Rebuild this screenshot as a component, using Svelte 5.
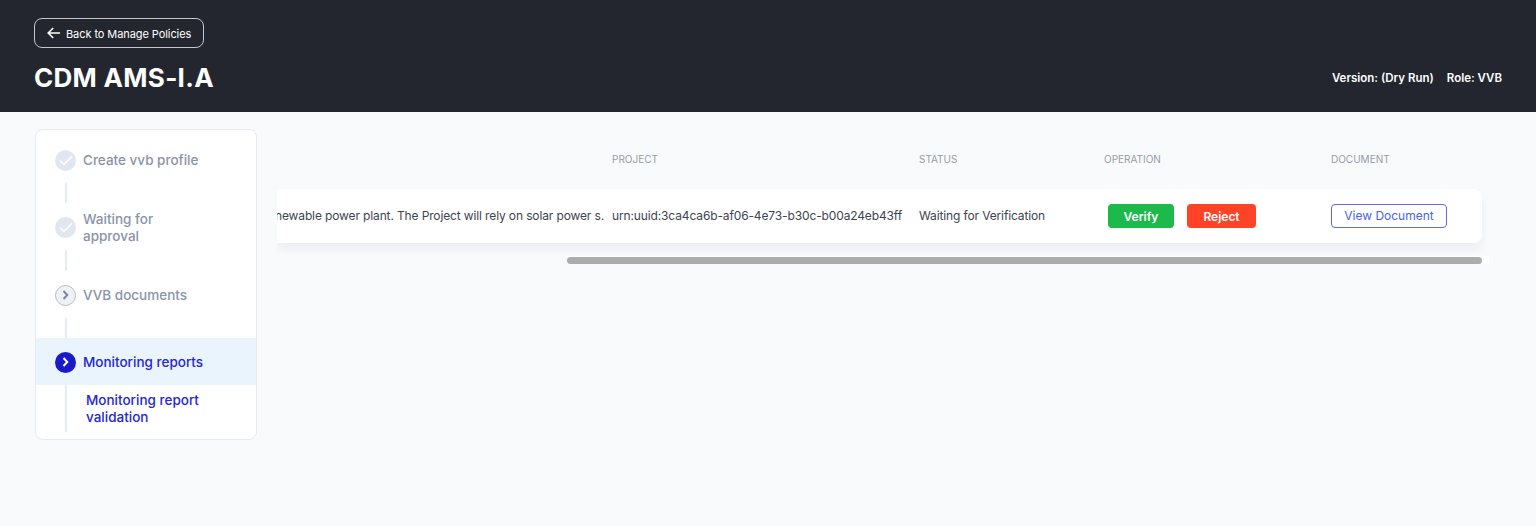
<script>
  const steps = [
    { label: 'Create vvb profile', state: 'done' },
    { label: 'Waiting for approval', state: 'done' },
    { label: 'VVB documents', state: 'next' },
    { label: 'Monitoring reports', state: 'active' }
  ];
</script>

<div class="page">
  <header class="header">
    <button class="back">
      <svg width="13" height="12" viewBox="0 0 13 12" fill="none" stroke="currentColor" stroke-width="1.6">
        <path d="M13 6H1.2M6.2 1 1.2 6l5 5" />
      </svg>
      <span>Back to Manage Policies</span>
    </button>
    <div class="title-row">
      <h1>CDM AMS-I.A</h1>
      <div class="meta">
        <span>Version: (Dry Run)</span>
        <span>Role: VVB</span>
      </div>
    </div>
  </header>

  <main class="content">
    <nav class="sidebar">
      {#each steps as step, i}
        <div class="step {step.state}">
          <span class="icon">
            {#if step.state === 'done'}
              <svg width="14" height="11" viewBox="0 0 14 11" fill="none" stroke="#fff" stroke-width="1.5">
                <path d="M1 5.5 5 9.5 13 1.2" />
              </svg>
            {:else}
              <svg width="7" height="10" viewBox="0 0 7 10" fill="none" stroke="currentColor" stroke-width="2">
                <path d="M1.5 1 5.3 5 1.5 9" />
              </svg>
            {/if}
          </span>
          <span class="label">{step.label}</span>
        </div>
        {#if i < steps.length - 1}
          <div class="connector"></div>
        {/if}
      {/each}
      <div class="sub">
        <span>Monitoring report validation</span>
      </div>
    </nav>

    <section class="table-wrap">
      <div class="thead">
        <div class="col-desc"></div>
        <div class="col-project">PROJECT</div>
        <div class="col-status">STATUS</div>
        <div class="col-op">OPERATION</div>
        <div class="col-doc">DOCUMENT</div>
      </div>
      <div class="row">
        <div class="col-desc"><span>renewable power plant. The Project will rely on solar power s.</span></div>
        <div class="col-project">urn:uuid:3ca4ca6b-af06-4e73-b30c-b00a24eb43ff</div>
        <div class="col-status">Waiting for Verification</div>
        <div class="col-op">
          <button class="verify">Verify</button>
          <button class="reject">Reject</button>
        </div>
        <div class="col-doc"><button class="view">View Document</button></div>
      </div>
      <div class="scrollbar"><div class="thumb"></div></div>
    </section>
  </main>
</div>

<style>
  :global(body) {
    margin: 0;
    font-family: Inter, "Noto Sans", sans-serif;
    background: #f9fafc;
  }
  .page {
    height: 526px;
    overflow: hidden;
    background: #f9fafc;
  }
  .header {
    box-sizing: border-box;
    height: 112px;
    padding: 18px 34px 0 34px;
    background: #23262f;
    color: #fff;
  }
  .back {
    display: flex;
    align-items: center;
    gap: 6px;
    box-sizing: border-box;
    width: 170px;
    height: 30px;
    padding: 0 0 0 12px;
    border: 1px solid #c4c6ca;
    border-radius: 8px;
    background: transparent;
    color: #fff;
    font: 400 11px Inter, sans-serif;
    letter-spacing: -0.08px;
    white-space: nowrap;
  }
  .back span {
    padding-top: 2px;
  }
  .title-row {
    display: flex;
    align-items: center;
    justify-content: space-between;
    margin-top: 12px;
  }
  h1 {
    margin: 0;
    font: 700 26px/36px Inter, sans-serif;
    letter-spacing: 0.3px;
  }
  .meta {
    display: flex;
    gap: 13px;
    font-size: 11.5px;
    font-weight: 600;
  }
  .content {
    display: flex;
    align-items: flex-start;
    padding: 17px 47px 0 35px;
    gap: 20px;
  }
  .sidebar {
    box-sizing: border-box;
    flex: 0 0 222px;
    height: 311px;
    padding-top: 6px;
    background: #fff;
    border: 1px solid #e6ebf2;
    border-radius: 8px;
    overflow: hidden;
  }
  .step {
    display: flex;
    align-items: center;
    gap: 7px;
    box-sizing: border-box;
    padding: 2px 19px 0;
    min-height: 47px;
    font-size: 13.5px;
    font-weight: 500;
    line-height: 17px;
    color: #8a94a8;
  }
  .step.active {
    background: #e9f4fd;
    color: #2626d4;
  }
  .step .label {
    max-width: 110px;
  }
  .step:first-child .label,
  .step.next .label,
  .step.active .label {
    max-width: none;
  }
  .icon {
    flex: none;
    display: flex;
    align-items: center;
    justify-content: center;
    box-sizing: border-box;
    width: 21px;
    height: 21px;
    border-radius: 50%;
  }
  .done .icon {
    background: #e1e7f0;
  }
  .next .icon {
    border: 1px solid #b4bcc9;
    background: #eef1f6;
    color: #7c869a;
  }
  .active .icon {
    background: #1a1ac8;
    color: #fff;
  }
  .connector {
    width: 2px;
    height: 20.34px;
    margin-left: 29px;
    background: #e3ebf7;
  }
  .sub {
    margin-left: 29px;
    padding: 7px 0 6px 19px;
    border-left: 2px solid #e3ebf7;
    width: 130px;
    font-size: 13.5px;
    font-weight: 500;
    line-height: 17px;
    color: #2626d4;
  }
  .table-wrap {
    flex: 0 0 1212px;
    width: 1212px;
    overflow: hidden;
    font-size: 12px;
  }
  .thead,
  .row {
    display: flex;
    align-items: center;
    margin-right: 7px;
  }
  .thead {
    height: 60px;
    font-size: 10px;
    color: #959caa;
  }
  .row {
    height: 54px;
    background: #fff;
    color: #3e4350;
    border-radius: 0 8px 8px 0;
    box-shadow: 0 6px 10px rgba(30, 40, 60, 0.06);
    letter-spacing: -0.13px;
  }
  .col-desc {
    flex: 0 0 335px;
    display: flex;
    justify-content: flex-end;
    overflow: hidden;
    white-space: nowrap;
  }
  .col-desc span {
    flex: none;
    padding-right: 8px;
  }
  .col-project {
    flex: 0 0 307px;
    white-space: nowrap;
  }
  .col-status {
    flex: 0 0 185px;
    white-space: nowrap;
  }
  .row .col-desc,
  .row .col-project,
  .row .col-status {
    padding-bottom: 2px;
  }
  .col-op {
    flex: 0 0 227px;
    display: flex;
    gap: 13px;
  }
  .row .col-op {
    padding-left: 4px;
    flex-basis: 223px;
  }
  .col-doc {
    white-space: nowrap;
  }
  button {
    cursor: pointer;
  }
  .verify,
  .reject {
    height: 24px;
    border: none;
    border-radius: 4px;
    color: #fff;
    font: 600 12px Inter, sans-serif;
    padding: 0;
  }
  .verify {
    width: 66px;
    background: #1cba4a;
  }
  .reject {
    width: 69px;
    background: #ff4326;
  }
  .view {
    display: block;
    box-sizing: border-box;
    width: 116px;
    height: 24px;
    margin-bottom: 1px;
    padding: 0;
    border: 1.4px solid #5f69e0;
    border-radius: 4px;
    background: #fff;
    color: #4a63e8;
    font: 400 12px Inter, sans-serif;
  }
  .scrollbar {
    margin: 13px 0 0 290px;
    padding-top: 1px;
    padding-right: 7px;
    background: #fff;
  }
  .thumb {
    height: 7px;
    background: #acacac;
    border-radius: 4px;
  }
</style>
